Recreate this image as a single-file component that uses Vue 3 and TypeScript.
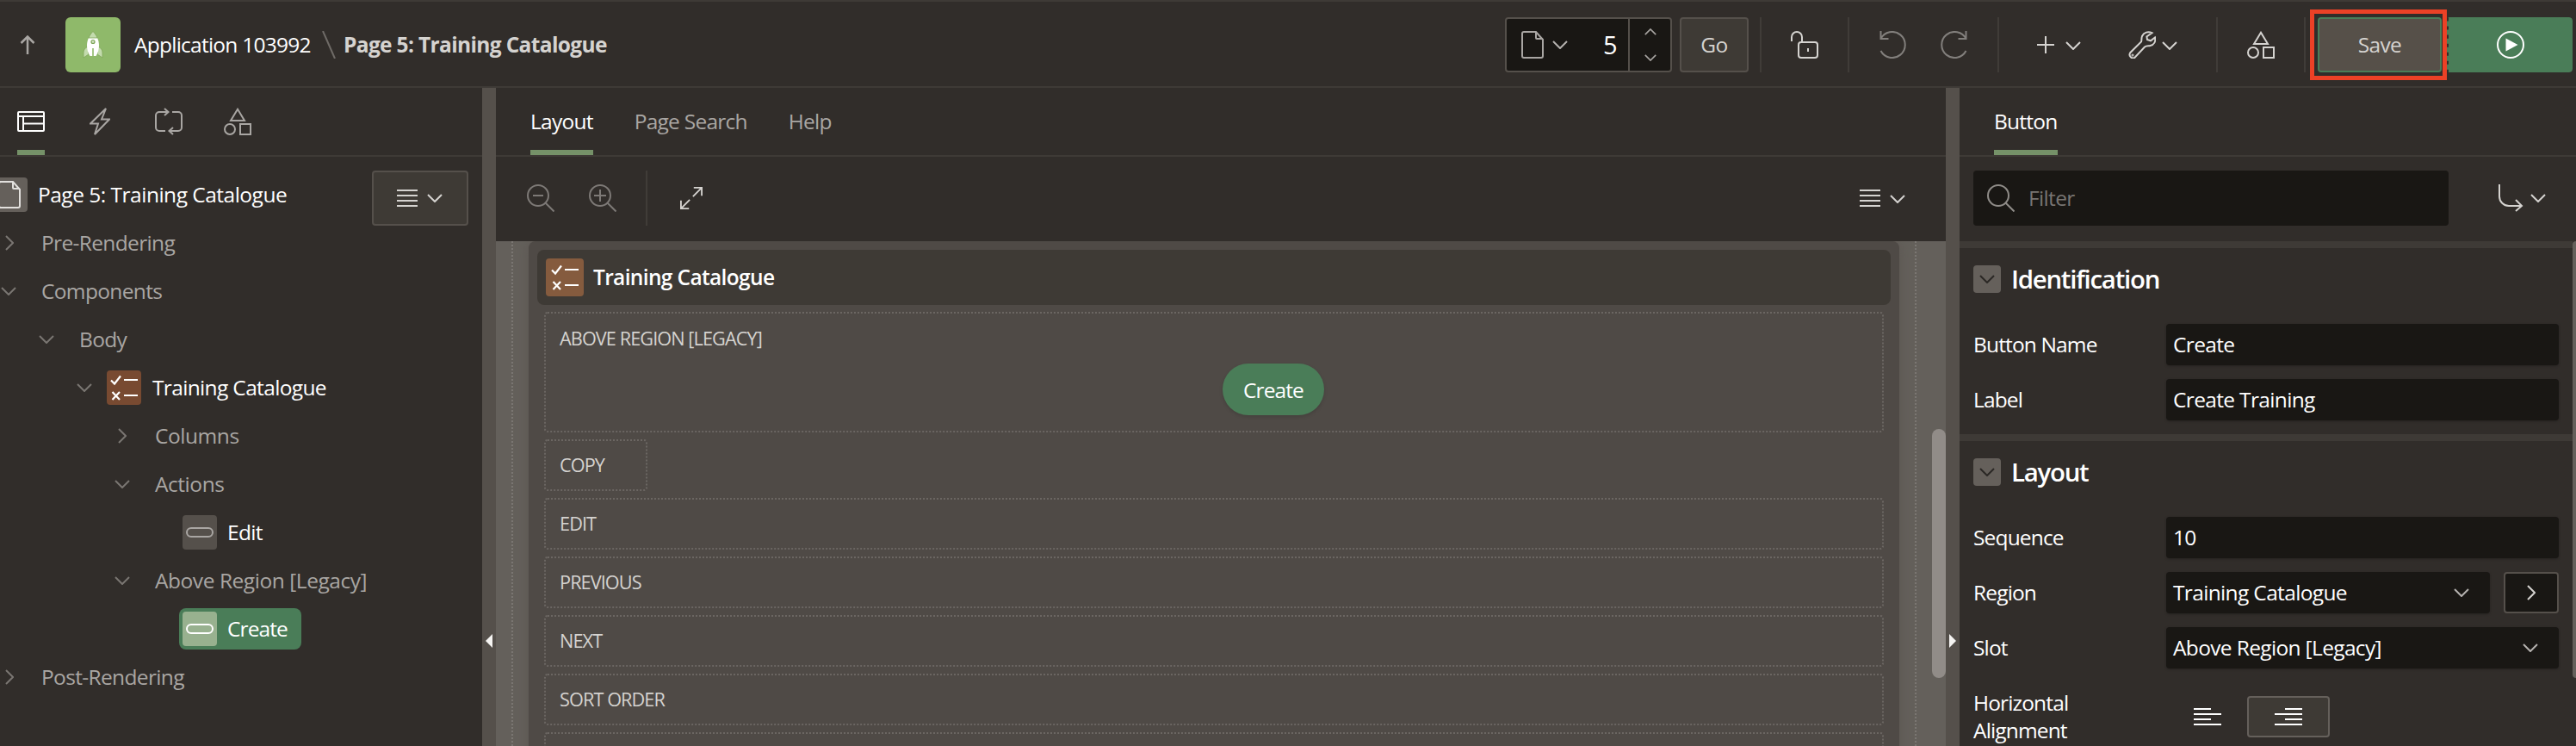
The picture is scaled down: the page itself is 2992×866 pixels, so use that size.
<script setup lang="ts">
interface TreeRow {
  label: string
  level: number
  state?: 'open' | 'closed'
  icon?: 'report' | 'button'
  selected?: boolean
}

const tree: TreeRow[] = [
  { label: 'Pre-Rendering', level: 0, state: 'closed' },
  { label: 'Components', level: 0, state: 'open' },
  { label: 'Body', level: 1, state: 'open' },
  { label: 'Training Catalogue', level: 2, state: 'open', icon: 'report' },
  { label: 'Columns', level: 3, state: 'closed' },
  { label: 'Actions', level: 3, state: 'open' },
  { label: 'Edit', level: 4, icon: 'button' },
  { label: 'Above Region [Legacy]', level: 3, state: 'open' },
  { label: 'Create', level: 4, icon: 'button', selected: true },
  { label: 'Post-Rendering', level: 0, state: 'closed' },
]

const slots = ['EDIT', 'PREVIOUS', 'NEXT', 'SORT ORDER', '']
</script>

<template>
  <div class="page">
    <svg class="defs" aria-hidden="true">
      <symbol id="i-down" viewBox="0 0 18 10"><path d="M1 1l8 8 8-8" fill="none" stroke="currentColor" stroke-width="2" /></symbol>
      <symbol id="i-right" viewBox="0 0 10 18"><path d="M1 1l8 8-8 8" fill="none" stroke="currentColor" stroke-width="2" /></symbol>
      <symbol id="i-menu" viewBox="0 0 24 20"><path d="M0 1h24M0 7h24M0 13h24M0 19h24" stroke="currentColor" stroke-width="2" /></symbol>
      <symbol id="i-page" viewBox="0 0 26 32">
        <path d="M3 1h14l8 9v19a2 2 0 0 1-2 2H3a2 2 0 0 1-2-2V3a2 2 0 0 1 2-2zM17 1v7a1 1 0 0 0 1 1h7" fill="none" stroke="currentColor" stroke-width="2" />
      </symbol>
      <symbol id="i-shapes" viewBox="0 0 32 32">
        <g fill="none" stroke="currentColor" stroke-width="2">
          <path d="M16 1.800L24 15H8z" /><circle cx="7" cy="25" r="6" /><rect x="19" y="19" width="12" height="12" />
        </g>
      </symbol>
      <symbol id="i-search" viewBox="0 0 32 32">
        <g fill="none" stroke="currentColor" stroke-width="2"><circle cx="13" cy="13" r="12" /><path d="M21.500 21.500l10 10" /></g>
      </symbol>
      <symbol id="i-report" viewBox="0 0 32 32">
        <path d="M1 7.500l4 4 7-9M16 7h16M2.500 21l8.500 9M11 21l-8.500 9M16 25h16" fill="none" stroke="currentColor" stroke-width="2.200" />
      </symbol>
      <symbol id="i-button" viewBox="0 0 32 12"><rect x="1" y="1" width="30" height="10" rx="5" fill="none" stroke="currentColor" stroke-width="2" /></symbol>
      <symbol id="i-undo" viewBox="0 0 32 32">
        <path d="M1.500 0v9h9M1.500 9A15 15 0 1 1 1.500 23" fill="none" stroke="currentColor" stroke-width="2" />
      </symbol>
    </svg>

    <header class="topbar">
      <svg class="up" viewBox="0 0 18 22"><path d="M9 22V1.500M1.500 9L9 1.500 16.500 9" /></svg>
      <div class="app-icon">
        <svg viewBox="0 0 24 32">
          <path d="M6 18c-3.500 2-5 4-5 7v6l6-4zM18 18c3.500 2 5 4 5 7v6l-6-4z" fill="#c3dbad" stroke="#7da558" stroke-width=".8" />
          <path d="M7 8h10c1.500 3 2 6 2 9 0 5-1.500 9-3.500 12h-7C6.500 26 5 22 5 17c0-3 .5-6 2-9z" fill="#fff" />
          <path d="M12 .5c2 2 4 4.500 5 7.500H7c1-3 3-5.500 5-7.500z" fill="#c3dbad" stroke="#7da558" stroke-width=".8" />
          <circle cx="12" cy="12.500" r="2" fill="#cfe0bf" stroke="#7da558" stroke-width="1.200" />
          <path d="M12 20v12" stroke="#8fb96a" stroke-width="1.600" />
        </svg>
      </div>
      <span class="app-name">Application 103992</span>
      <svg class="slash" viewBox="0 0 16 32"><path d="M1 0l14 32" /></svg>
      <span class="page-name">Page 5: Training Catalogue</span>

      <div class="finder">
        <svg class="ic-page"><use href="#i-page" /></svg>
        <svg class="ic-down"><use href="#i-down" /></svg>
        <span class="num">5</span>
        <div class="spin">
          <svg class="flip"><use href="#i-down" /></svg>
          <svg><use href="#i-down" /></svg>
        </div>
      </div>
      <button class="btn go">Go</button>
      <i class="sep s1"></i>
      <svg class="lock" viewBox="0 0 32 32">
        <path d="M1 12V7a6 6 0 0 1 12 0v6" /><rect x="9" y="13" width="22" height="18" rx="3" /><path d="M20 20v4" />
      </svg>
      <i class="sep s2"></i>
      <svg class="undo"><use href="#i-undo" /></svg>
      <svg class="undo redo"><use href="#i-undo" /></svg>
      <i class="sep s3"></i>
      <svg class="plus" viewBox="0 0 20 20"><path d="M10 0v20M0 10h20" /></svg>
      <svg class="ic-down d1"><use href="#i-down" /></svg>
      <svg class="wrench" viewBox="0 0 32 32">
        <path d="M27.500 2.200C23 .2 18 1.500 16 6c-1 2.500-.3 5-1 6.500L2.200 25.200a4 4 0 0 0 5.400 5.600L19 18.500c2-1.500 4-1 6.500-1.500 4.500-1 6.500-5 5.500-9.500l-5 3.800-4-1.300-.6-3.600z" />
        <circle cx="5" cy="28" r=".5" />
      </svg>
      <svg class="ic-down d2"><use href="#i-down" /></svg>
      <i class="sep s4"></i>
      <svg class="ic32 sh"><use href="#i-shapes" /></svg>
      <i class="sep s5"></i>
      <div class="highlight"><button class="btn save">Save</button></div>
      <button class="run">
        <svg viewBox="0 0 32 32"><circle cx="16" cy="16" r="15" fill="none" stroke="#fff" stroke-width="2" /><path d="M10.500 8.500v15L24.500 16z" fill="#fff" /></svg>
      </button>
    </header>

    <main class="body">
      <aside class="left">
        <nav class="tabs icons">
          <span class="tab on">
            <svg class="ic32" viewBox="0 0 32 32"><g><rect x="1" y="5" width="30" height="22" rx="1" /><path d="M1 10h30M7 10v17M7 18.500h24" /></g></svg>
          </span>
          <span class="tab"><svg class="ic24" viewBox="0 0 24 32"><path d="M19 1L1 18.500h9L6 31l17-17.500h-9z" /></svg></span>
          <span class="tab"><svg class="ic32" viewBox="0 0 32 32"><path d="M12 27H5a4 4 0 0 1-4-4V9a4 4 0 0 1 4-4h10M11 1l4.500 4L11 9M20 5h7a4 4 0 0 1 4 4v14a4 4 0 0 1-4 4H17M21 23l-4.500 4 4.500 4" /></svg></span>
          <span class="tab"><svg class="ic32"><use href="#i-shapes" /></svg></span>
        </nav>
        <div class="root-row">
          <span class="root-icon"><svg class="ic-page"><use href="#i-page" /></svg></span>
          <span class="root-label">Page 5: Training Catalogue</span>
          <button class="btn menu"><svg class="ic-menu"><use href="#i-menu" /></svg><svg class="ic-down"><use href="#i-down" /></svg></button>
        </div>
        <ul class="tree">
          <li v-for="row in tree" :key="row.label" :class="['l' + row.level, { strong: row.icon }]">
            <span v-if="row.state" class="tw">
              <svg v-if="row.state === 'open'" class="ic-down"><use href="#i-down" /></svg>
              <svg v-else class="ic-right"><use href="#i-right" /></svg>
            </span>
            <span class="node" :class="{ sel: row.selected, has: row.icon }">
              <span v-if="row.icon" class="nic" :class="row.icon"><svg><use :href="'#i-' + row.icon" /></svg></span>
              <span class="t">{{ row.label }}</span>
            </span>
          </li>
        </ul>
      </aside>
      <div class="splitter"><i class="arrow-l"></i></div>

      <section class="center">
        <nav class="tabs text">
          <span class="tab on">Layout</span><span class="tab">Page Search</span><span class="tab">Help</span>
        </nav>
        <div class="toolbar">
          <svg class="ic32 dim" viewBox="0 0 32 32"><use href="#i-search" /><path d="M7 13h12" stroke="currentColor" stroke-width="2" /></svg>
          <svg class="ic32 dim zin" viewBox="0 0 32 32"><use href="#i-search" /><path d="M6 13h14M13 6v14" stroke="currentColor" stroke-width="2" /></svg>
          <i class="sep zs"></i>
          <svg class="expand" viewBox="0 0 28 28"><path d="M17 1h10v10M27 1L16 12M11 27H1V17M1 27l11-11" /></svg>
          <span class="grow"></span>
          <svg class="ic-menu"><use href="#i-menu" /></svg>
          <svg class="ic-down"><use href="#i-down" /></svg>
        </div>
        <div class="canvas">
          <div class="guide">
            <div class="region">
              <div class="region-title">
                <span class="ric"><svg><use href="#i-report" /></svg></span>
                <b>Training Catalogue</b>
              </div>
              <div class="slot big"><span>ABOVE REGION [LEGACY]</span><button class="pill">Create</button></div>
              <div class="slot small"><span>COPY</span></div>
              <div v-for="s in slots" :key="s" class="slot"><span>{{ s }}</span></div>
            </div>
          </div>
          <i class="thumb"></i>
        </div>
      </section>
      <div class="splitter"><i class="arrow-r"></i></div>

      <aside class="right">
        <nav class="tabs text"><span class="tab on">Button</span></nav>
        <div class="filter-row">
          <div class="filter"><svg class="ic32"><use href="#i-search" /></svg><span>Filter</span></div>
          <svg class="goto" viewBox="0 0 30 32"><path d="M2 0v14a11 11 0 0 0 11 11h15M21 18l7 7-7 6" /></svg>
          <svg class="ic-down"><use href="#i-down" /></svg>
        </div>
        <div class="props">
          <section>
            <h2><span><svg class="ic-down"><use href="#i-down" /></svg></span>Identification</h2>
            <div class="field"><label>Button Name</label><div class="inp">Create</div></div>
            <div class="field"><label>Label</label><div class="inp">Create Training</div></div>
          </section>
          <section>
            <h2><span><svg class="ic-down"><use href="#i-down" /></svg></span>Layout</h2>
            <div class="field"><label>Sequence</label><div class="inp">10</div></div>
            <div class="field">
              <label>Region</label><div class="inp">Training Catalogue<svg class="ic-down"><use href="#i-down" /></svg></div>
              <div class="nav"><svg class="ic-right"><use href="#i-right" /></svg></div>
            </div>
            <div class="field"><label>Slot</label><div class="inp">Above Region [Legacy]<svg class="ic-down"><use href="#i-down" /></svg></div></div>
            <div class="field tall">
              <label>Horizontal Alignment</label>
              <div class="al"><svg viewBox="0 0 32 20"><path d="M0 1h20M0 7h32M0 13h20M0 19h32" /></svg></div>
              <div class="al act"><svg viewBox="0 0 32 20"><path d="M12 1h20M0 7h32M12 13h20M0 19h32" /></svg></div>
            </div>
          </section>
          <i class="thumb"></i>
        </div>
      </aside>
    </main>
  </div>
</template>

<style>
body { margin: 0; background: #312d2a; overflow: hidden; }
</style>

<style scoped>
* { box-sizing: border-box; }
svg { display: block; flex: none; }
button { font: inherit; letter-spacing: inherit; color: inherit; padding: 0; margin: 0; }
.page {
  width: 2992px; height: 866px; overflow: hidden; background: #312d2a; color: #fff;
  font: 24.5px/32px "Open Sans", "Noto Sans", sans-serif; letter-spacing: -.65px;
  display: flex; flex-direction: column; white-space: nowrap;
}
.defs { position: absolute; width: 0; height: 0; }
.ic32 { width: 32px; height: 32px; }
.ic24 { width: 24px; height: 32px; }
.ic-page { width: 26px; height: 32px; }
.ic-down { width: 18px; height: 10px; }
.ic-right { width: 10px; height: 18px; }
.ic-menu { width: 24px; height: 20px; }
.btn { display: flex; align-items: center; justify-content: center; height: 64px; border: 2px solid #55504b; border-radius: 4px; background: #3e3a35; color: #d5d3d0; }
.sep { flex: none; width: 2px; height: 64px; background: #403c38; }

.topbar { flex: none; height: 102px; border-top: 2px solid #3e3a36; border-bottom: 2px solid #3e3a36; display: flex; align-items: center; padding: 2px 0 0 23px; color: #d5d3d0; }
.up { width: 18px; height: 22px; fill: none; stroke: #a9a6a3; stroke-width: 2.5; }
.app-icon { width: 64px; height: 64px; margin-left: 35px; background: #8fb96a; border-radius: 6px; display: flex; align-items: center; justify-content: center; }
.app-icon svg { width: 24px; height: 32px; }
.app-name { color: #fff; width: 218px; margin-left: 16px; letter-spacing: -.75px; }
.slash { width: 16px; height: 32px; fill: none; stroke: #6f6b67; stroke-width: 2; }
.page-name { font-weight: 700; margin-left: 9px; width: 1349px; }
.finder { width: 194px; height: 64px; border: 2px solid #55504b; border-radius: 4px; background: #191714; display: flex; align-items: center; color: #a9a6a3; padding-left: 17px; }
.finder > .ic-down { margin-left: 10px; color: #b5b2af; }
.num { width: 18px; margin-left: 41px; font-size: 29px; color: #fff; }
.spin { margin-left: auto; width: 49px; height: 60px; border-left: 2px solid #55504b; display: flex; flex-direction: column; align-items: center; justify-content: center; gap: 22px; }
.spin svg { width: 14px; height: 8px; }
.flip { transform: scaleY(-1); }
.go { width: 80px; margin-left: 9px; padding-bottom: 1px; }
.s1 { margin-left: 13px; }
.lock { width: 32px; height: 32px; margin-left: 34px; fill: none; stroke: #d5d3d0; stroke-width: 2; }
.s2 { margin-left: 34px; }
.undo { width: 32px; height: 32px; margin-left: 35px; color: #827f7c; }
.redo { margin-left: 38px; transform: scaleX(-1); }
.s3 { margin-left: 35px; }
.plus { width: 20px; height: 20px; margin-left: 44px; stroke: #d5d3d0; stroke-width: 2; }
.d1 { margin-left: 13px; margin-top: 2px; }
.wrench { width: 32px; height: 32px; margin-left: 55px; fill: none; stroke: #d5d3d0; stroke-width: 2; }
.d2 { margin-left: 7px; margin-top: 2px; }
.s4 { margin-left: 45px; }
.sh { margin-left: 34px; }
.s5 { margin-left: 34px; }
.highlight { width: 159px; height: 82px; margin-left: 5px; border: 5px solid #eb4126; display: flex; align-items: center; padding-left: 4px; }
.save { width: 144px; background: #565049; border-color: #4a7d58; }
.run { width: 146px; height: 64px; background: #4a7d58; border: 0; border-left: 2px dashed #4a7d58; background-clip: padding-box; border-radius: 2px 4px 4px 2px; display: flex; align-items: center; justify-content: center; }
.run svg { width: 32px; height: 32px; }

.body { flex: 1; min-height: 0; display: flex; }
.left { width: 560px; }
.splitter { width: 16px; background: #55504b; position: relative; }
.arrow-l, .arrow-r { position: absolute; top: 634px; left: 4px; border: 8px solid transparent; border-left-width: 0; border-right: 8px solid #f5f4f2; }
.arrow-r { border-right: 0; border-left: 8px solid #f5f4f2; }
.center { width: 1684px; display: flex; flex-direction: column; }
.right { flex: 1; display: flex; flex-direction: column; min-width: 0; }

.tabs { flex: none; height: 80px; border-bottom: 2px solid #3e3a36; display: flex; color: #a9a6a3; }
.tab { height: 78px; display: flex; align-items: center; border-bottom: 6px solid transparent; padding-top: 6px; }
.tab.on { border-color: #759168; color: #fff; }
.tabs.icons { padding-left: 20px; }
.tabs.icons svg { fill: none; stroke: currentColor; stroke-width: 2; }
.tabs.icons .tab { margin-right: 48px; }
.tabs.icons .tab:first-child { margin-right: 52px; }
.tabs.icons .tab:nth-child(2) { margin-right: 52px; }
.tabs.text .tab { margin-right: 48px; padding-top: 5px; }
.tabs.text { padding-left: 40px; letter-spacing: -.75px; }

.root-row { height: 72px; display: flex; position: relative; padding-top: 24px; }
.root-icon { width: 32px; height: 40px; background: #65605b; border-radius: 0 4px 4px 0; color: #e2e0dd; display: flex; align-items: center; }
.root-icon svg { margin-left: -2px; }
.root-label { margin-left: 12px; line-height: 39px; letter-spacing: -.5px; }
.menu { position: absolute; right: 16px; top: 16px; width: 112px; color: #d5d3d0; gap: 11px; padding-right: 2px; }
.tree { list-style: none; margin: 0; padding: 0; color: #a9a6a3; }
.tree li { height: 56px; display: flex; align-items: center; }
.tree li.strong { color: #fff; }
.tw { width: 20px; display: flex; justify-content: center; color: #7a7672; }
.l1 .tw { margin-left: 44px; }
.l2 .tw { margin-left: 88px; }
.l3 .tw { margin-left: 132px; }
.l0 .ic-right { margin-left: 2px; }
.t { padding-bottom: 1px; }
.l3 .t { letter-spacing: -.45px; }
.node { margin-left: 28px; height: 48px; display: flex; align-items: center; }
.node.has { margin-left: 12px; padding: 0 16px 0 4px; border-radius: 8px; }
.l4 .node { margin-left: 208px; }
.nic { width: 40px; height: 40px; border-radius: 4px; background: #55504b; color: #a9a6a3; display: flex; align-items: center; justify-content: center; margin-right: 13px; }
.l4 .nic { margin-right: 12px; }
.nic.report { background: #784a31; color: #fff; }
.nic.report svg { width: 32px; height: 32px; }
.nic.button svg { width: 32px; height: 12px; }
.node.sel { width: 142px; background: #4a7d58; color: #fff; letter-spacing: -.9px; }
.sel .nic { background: #98b18f; color: #fff; }

.toolbar { flex: none; height: 98px; display: flex; align-items: center; padding: 0 47px 2px 36px; color: #d5d3d0; }
.dim { color: #7d7976; }
.ic32.zin { margin-left: 40px; }
.zs { margin-left: 34px; }
.expand { width: 26px; height: 28px; margin-left: 38px; fill: none; stroke: #d5d3d0; stroke-width: 2; }
.grow { flex: 1; }
.toolbar .ic-down { margin-left: 11px; margin-top: 2px; }
.canvas { flex: 1; min-height: 0; position: relative; overflow: hidden; background: #64605b; padding: 0 34px 0 18px; }
.guide { border: 2px dotted #7b7773; border-width: 0 2px; padding: 0 18px; height: 100%; }
.region { height: 640px; background: #4f4a46; border-radius: 8px 8px 0 0; padding: 10px 18px 0; box-shadow: 0 0 16px #5b5651; }
.region-title { height: 64px; margin: 0 -8px 8px; background: #3e3a35; border-radius: 8px; display: flex; align-items: center; padding-left: 10px; }
.region-title b { font-weight: 600; padding-bottom: 1px; }
.ric { width: 44px; height: 44px; background: #855b3e; border-radius: 4px; display: flex; align-items: center; justify-content: center; margin-right: 11px; }
.ric svg { width: 32px; height: 32px; }
.slot { height: 60px; margin-bottom: 8px; border: 2px dotted #6b6662; border-radius: 4px; font-size: 21.7px; letter-spacing: -.92px; color: #d5d3d0; line-height: 56px; padding-left: 16px; }
.slot.small { width: 120px; }
.slot.big { height: 140px; position: relative; line-height: 57px; }
.pill { position: absolute; left: 786px; top: 58px; width: 118px; height: 60px; border: 0; border-radius: 30px; background: #4a7d58; color: #fff; font-size: 24.5px; box-shadow: 0 2px 4px #0002; }
.canvas .thumb { position: absolute; right: 0; top: 218px; width: 16px; height: 289px; border-radius: 8px; background: #918c88; }

.filter-row { flex: none; height: 98px; display: flex; align-items: center; padding: 0 35px 2px 16px; color: #d5d3d0; }
.filter { width: 552px; height: 64px; background: #191714; border-radius: 4px; display: flex; align-items: center; padding-left: 16px; color: #787572; }
.filter svg { color: #8f8c88; margin-right: 16px; }
.goto { width: 30px; height: 32px; margin-left: auto; fill: none; stroke: #d5d3d0; stroke-width: 2; }
.filter-row > .ic-down { margin-left: 8px; }
.props { flex: 1; min-height: 0; position: relative; overflow: hidden; padding-right: 4px; }
.props section { border-top: 8px solid #3e3a36; height: 224px; padding: 4px 16px 0; }
.props section + section { height: 400px; }
.props h2 { margin: 0; height: 68px; font-size: 29.4px; font-weight: 600; letter-spacing: -1.25px; line-height: 64px; display: flex; align-items: center; padding-bottom: 4px; }
h2 span { width: 32px; height: 32px; border-radius: 4px; background: #65605b; color: #2b2825; display: flex; align-items: center; justify-content: center; margin-right: 12px; }
.field { display: flex; align-items: center; margin-top: 16px; height: 48px; }
.field label { width: 224px; padding-bottom: 1px; letter-spacing: -.85px; }
.inp { flex: 1; height: 48px; background: #191714; border-radius: 4px; padding: 0 24px 1px 8px; display: flex; align-items: center; box-shadow: 0 1px 3px #0004; }
.inp svg { margin-left: auto; color: #b5b2af; }
.nav { width: 64px; height: 48px; margin-left: 16px; border: 2px solid #55504b; border-radius: 4px; background: #191714; color: #d5d3d0; display: flex; align-items: center; justify-content: center; }
.field.tall { height: 64px; margin-top: 24px; }
.tall label { white-space: normal; padding-right: 48px; }
.al { width: 96px; height: 48px; display: flex; align-items: center; justify-content: center; border: 2px solid transparent; border-radius: 4px; }
.al.act { margin-left: -2px; border-color: #65605b; background: #3e3a35; }
.al svg { width: 32px; height: 20px; stroke: #fff; stroke-width: 2; }
.props .thumb { position: absolute; right: 0; top: 0; width: 4px; height: 507px; background: #65605b; border-radius: 4px 0 0 4px; }
</style>
